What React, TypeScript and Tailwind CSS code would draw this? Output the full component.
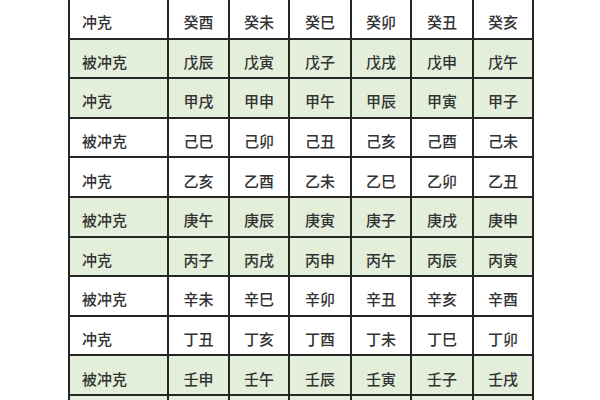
import React from 'react';

const rows: { cells: string[]; green: boolean }[] = [
  { cells: ['冲克', '癸酉', '癸未', '癸巳', '癸卯', '癸丑', '癸亥'], green: false },
  { cells: ['被冲克', '戊辰', '戊寅', '戊子', '戊戌', '戊申', '戊午'], green: true },
  { cells: ['冲克', '甲戌', '甲申', '甲午', '甲辰', '甲寅', '甲子'], green: true },
  { cells: ['被冲克', '己巳', '己卯', '己丑', '己亥', '己酉', '己未'], green: false },
  { cells: ['冲克', '乙亥', '乙酉', '乙未', '乙巳', '乙卯', '乙丑'], green: false },
  { cells: ['被冲克', '庚午', '庚辰', '庚寅', '庚子', '庚戌', '庚申'], green: true },
  { cells: ['冲克', '丙子', '丙戌', '丙申', '丙午', '丙辰', '丙寅'], green: true },
  { cells: ['被冲克', '辛未', '辛巳', '辛卯', '辛丑', '辛亥', '辛酉'], green: false },
  { cells: ['冲克', '丁丑', '丁亥', '丁酉', '丁未', '丁巳', '丁卯'], green: false },
  { cells: ['被冲克', '壬申', '壬午', '壬辰', '壬寅', '壬子', '壬戌'], green: true },
  { cells: ['', '', '', '', '', '', ''], green: true },
];

const App: React.FC = () => {
  return (
    <div className="w-[600px] h-[400px] overflow-hidden bg-white pl-[68px]">
      <table
        className="table-fixed border-collapse -mt-[2px] text-[15px] font-medium text-[#333]"
        style={{ fontFamily: '"Noto Sans CJK SC", "Noto Sans", sans-serif' }}
      >
        <colgroup>
          <col className="w-[99px]" />
          <col className="w-[61px]" />
          <col className="w-[60px]" />
          <col className="w-[62px]" />
          <col className="w-[60px]" />
          <col className="w-[62px]" />
          <col className="w-[60px]" />
        </colgroup>
        <tbody>
          {rows.map((row, i) => (
            <tr key={i} className={row.green ? 'bg-[#e3eedb]' : 'bg-white'}>
              {row.cells.map((c, j) => (
                <td
                  key={j}
                  className={
                    'h-[39.6px] border-2 border-[#262626] p-0 pt-[6px] leading-none ' +
                    (j === 0 ? 'text-left pl-[12px]' : 'text-center')
                  }
                >
                  {c}
                </td>
              ))}
            </tr>
          ))}
        </tbody>
      </table>
    </div>
  );
};

export default App;
